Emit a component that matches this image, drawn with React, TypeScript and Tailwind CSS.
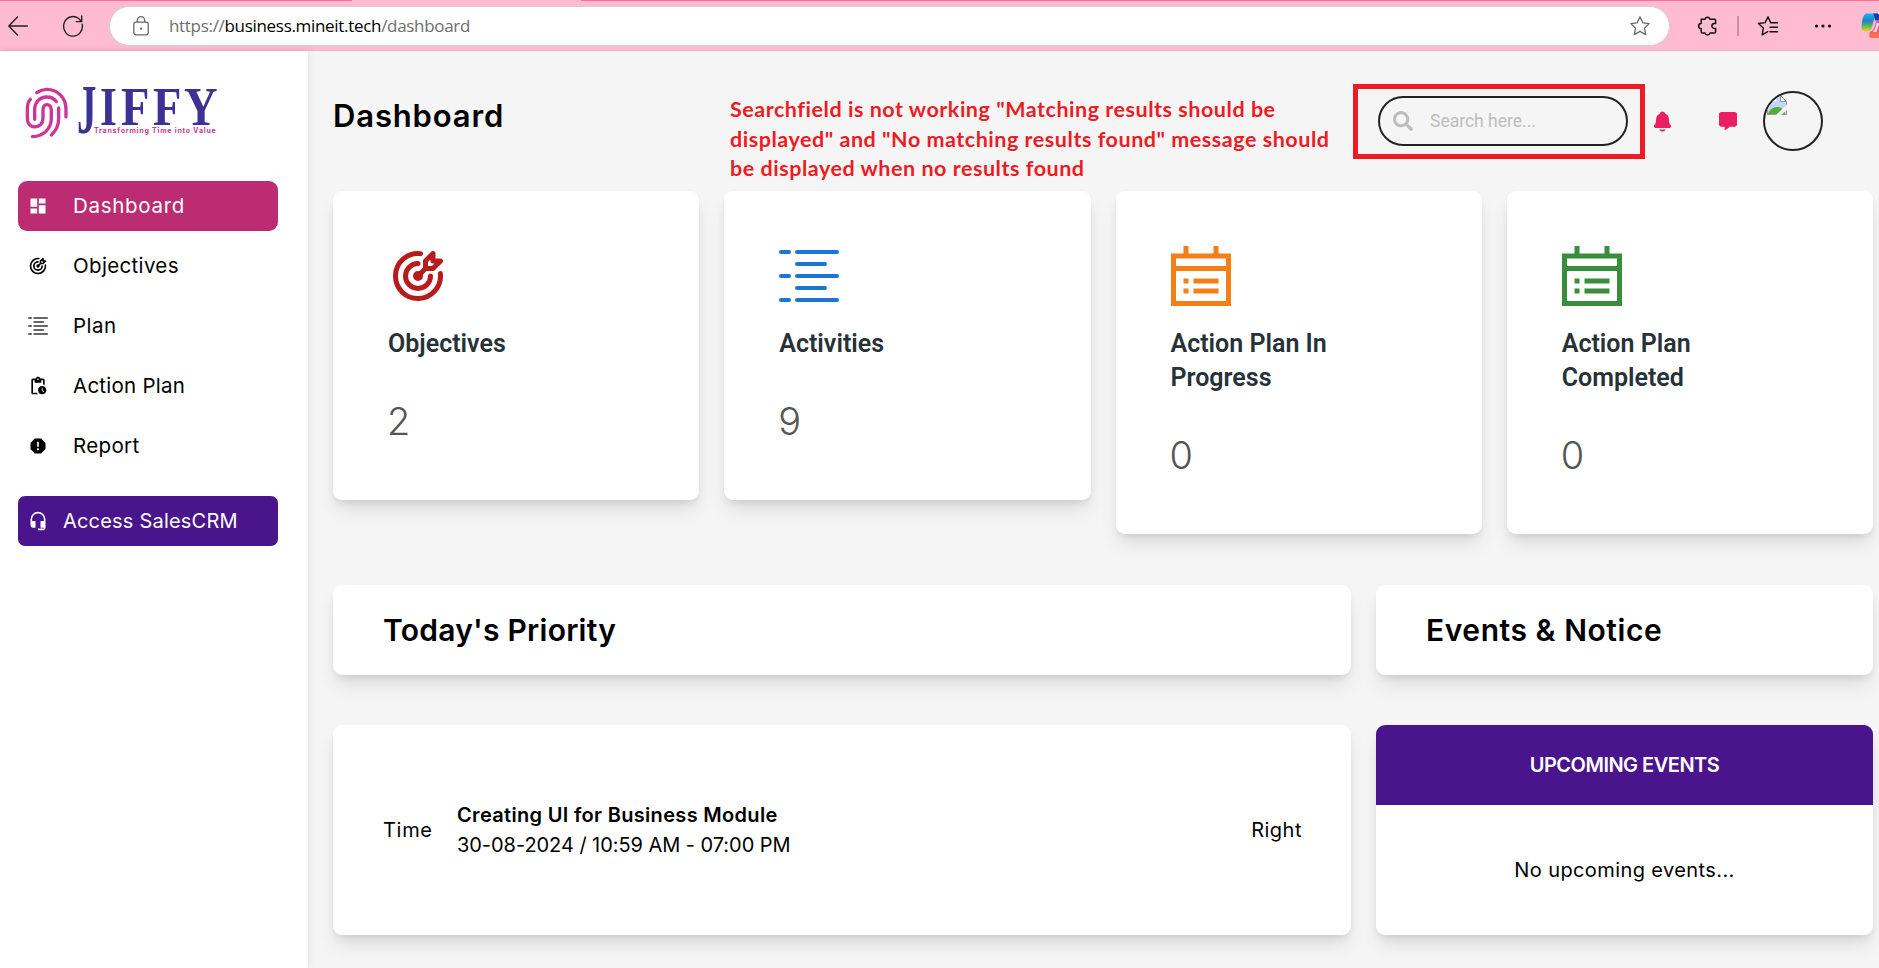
import React from "react";
import type { ReactNode } from "react";
import { IoNotifications } from "react-icons/io5";
import { FaMessage } from "react-icons/fa6";
import { FaSearch } from "react-icons/fa";
import { MdDashboard, MdHeadsetMic, MdPendingActions, MdReport } from "react-icons/md";
import { TbTargetArrow } from "react-icons/tb";

const cardShadow =
  "shadow-[0_12.5px_19px_-3.75px_rgba(0,0,0,0.1),0_5px_8px_-3px_rgba(0,0,0,0.1)]";

function PlanIcon({ className }: { className: string }) {
  return (
    <svg viewBox="0 0 60 60" className={className} fill="none" stroke="currentColor" strokeWidth="4" strokeLinecap="round">
      <path d="M2 6h8M18 6h40M18 18h28M2 30h8M18 30h40M18 42h28M2 54h8M18 54h40" />
    </svg>
  );
}

function CalendarIcon({ className }: { className: string }) {
  return (
    <svg viewBox="0 0 24 24" className={className} fill="none" stroke="currentColor" strokeWidth="2">
      <path d="M6 4V0M18 4V0M1 4h22v19H1zM1 9h22M5 14h2M9 14h10M5 18h2M9 18h10" />
    </svg>
  );
}

function BrowserBar() {
  return (
    <div className="flex h-[51px] shrink-0 flex-col border-b border-[#f5aec6] bg-[#ffbbd2]">
      <div className="flex h-px shrink-0 justify-between">
        <div className="w-[352px] bg-[#ff6b9d]" />
        <div className="w-[1298px] bg-[#ff6b9d]" />
      </div>
      <div className="flex grow items-center overflow-hidden">
        <svg viewBox="0 0 20 20" className="ml-2 size-5 shrink-0" fill="none" stroke="#222" strokeWidth="1.4" strokeLinecap="round" strokeLinejoin="round">
          <path d="M19.3 10H.8M9.5 .9.8 10l8.7 9.1" />
        </svg>
        <svg viewBox="0 0 22 24" className="ml-[34px] h-6 w-[22px] shrink-0" fill="none" stroke="#222" strokeWidth="1.4" strokeLinecap="round" strokeLinejoin="round">
          <path d="M20.2 10.2A9.4 9.8 0 1 1 16.4 4.3L19.6 7.4M19.7 2v5.6h-5.6" />
        </svg>
        <div className="ml-[25px] flex h-10 w-[1561px] shrink-0 items-center rounded-full border border-[#d3cdd0] bg-white">
          <svg viewBox="0 0 16 20" className="ml-[23px] h-5 w-4 shrink-0" fill="none" stroke="#666" strokeWidth="1.3">
            <rect x=".8" y="6.2" width="14.4" height="12.6" rx="2" />
            <path d="M4.3 6V4.4a3.7 3.7 0 0 1 7.4 0V6" />
            <circle cx="8" cy="12.7" r="1.1" fill="#666" stroke="none" />
          </svg>
          <span className="ml-[20px] font-['Open_Sans',sans-serif] text-[17px] tracking-[-0.31px] text-[#6d6d6d]">
            https://<span className="text-black">business.mineit.tech</span>/dashboard
          </span>
          <svg viewBox="0 0 22 22" className="mr-[18px] ml-auto size-[22px]" fill="none" stroke="#6a6a6a" strokeWidth="1.3" strokeLinejoin="round">
            <path d="m11 1.800 2.800 6 6.400.8-4.700 4.500 1.200 6.500-5.700-3.200-5.700 3.200 1.200-6.500L1.800 8.600l6.400-.8z" />
          </svg>
        </div>
        <svg viewBox="0 0 22 22" className="ml-[27px] size-[22px] shrink-0" fill="none" stroke="#111" strokeWidth="1.5" strokeLinejoin="round">
          <path d="M4.200 4.200H8a2.600 2.600 0 0 1 5 0h4.600a1 1 0 0 1 1 1v3.200h-1.200a2.500 2.500 0 0 0 0 5h1.200v3.700a1 1 0 0 1-1 1H13a2.600 2.600 0 0 1-5 0H5.200a1 1 0 0 1-1-1v-3.500a2.600 2.600 0 0 1 0-5.200z" />
        </svg>
        <div className="ml-[18px] h-5 w-0.5 shrink-0 bg-[#c890a4]" />
        <svg viewBox="0 0 22 22" className="ml-[18px] size-[22px] shrink-0" fill="none" stroke="#111" strokeWidth="1.4" strokeLinejoin="round" strokeLinecap="round">
          <path d="M20.500 7.800h-6.800L11 1.800 8.200 7.600 1.400 8.500l4.900 4.600-1.100 6.700 5.600-3.100M13 12.300h7.500M13 16.800h7.500" />
        </svg>
        <svg viewBox="0 0 18 6" className="ml-[35px] h-1.5 w-[18px] shrink-0" fill="#111">
          <circle cx="2.500" cy="3" r="1.600" />
          <circle cx="9" cy="3" r="1.600" />
          <circle cx="15.500" cy="3" r="1.600" />
        </svg>
        <svg viewBox="0 0 28 28" className="ml-[29px] size-7 shrink-0">
          <defs>
            <linearGradient id="copilotCool" x1="0" y1="0" x2="0" y2="1">
              <stop offset="0" stopColor="#1fb2f5" />
              <stop offset=".4" stopColor="#1b83c9" />
              <stop offset=".7" stopColor="#5fb95c" />
              <stop offset="1" stopColor="#f7cf10" />
            </linearGradient>
            <linearGradient id="copilotWarm" x1="0" y1="0" x2="0" y2="1">
              <stop offset="0" stopColor="#d65bd0" />
              <stop offset=".5" stopColor="#f2587d" />
              <stop offset="1" stopColor="#f97a3c" />
            </linearGradient>
          </defs>
          <path d="M6 1.500h11c-3 1-4 5-5 10s-2.500 8-6 8C2 19.500.300 18 .600 14 1 9 2 1.500 6 1.500z" fill="url(#copilotCool)" />
          <path d="M12 1.500h4c2 0 3 3 3.500 7h-5.500c-.500-3-1-6-2-7z" fill="#123fa8" />
          <path d="M15 9h9c4 0 3 17-3 17H10.500C7.500 26 8 22 9 19.500c4 0 4.500-5 6-10.500z" fill="url(#copilotWarm)" />
          <path d="M15.500 11h3l-3 9h-3.500c2-2 2.800-6 3.500-9z" fill="#ffd3e0" />
        </svg>
      </div>
    </div>
  );
}

function Logo() {
  return (
    <div className="ml-[25px] flex h-[54px] items-start">
      <svg viewBox="75 110 132 158" className="h-[52.600px] w-[44px] shrink-0" fill="none" stroke="#cf3498" strokeWidth="10" strokeLinecap="round">
        <path d="M110 127Q125 117 140 117C172 117 198 142 198 176V200" />
        <path d="M91 147Q82 156 82 176V205C82 222 93 230 104 230 118 230 129 220 129 205V180C129 168 134 163 141 163 148 163 154 169 154 180V205C154 235 130 259 97 259" />
        <path d="M104 207V178C104 155 120 140 140 140 153 140 163 145 169 154" />
        <path d="M176 173V205C176 225 168 242 154 254" />
      </svg>
      <div className="ml-2 h-[54px] w-[142px] font-['Liberation_Serif',serif] text-[54px] leading-[36px] font-bold text-[#3c3195]">
        <div className="flex h-9 items-center pt-[3px]">
          <span className="inline-block w-[23px] origin-[0_0] scale-x-[0.72] scale-y-[1.280]"><span className="relative -top-[2px]">J</span></span>
          <span className="inline-block w-[21px] origin-left scale-x-[0.800]">I</span>
          <span className="inline-block w-[32px] origin-left scale-x-[0.860]">F</span>
          <span className="inline-block w-[31px] origin-left scale-x-[0.860]">F</span>
          <span className="inline-block w-[34px] origin-left scale-x-[0.860]">Y</span>
        </div>
        <div className="mt-[3px] ml-[17px] font-['Inter',sans-serif] text-[7px] leading-[10px] font-bold tracking-[0.780px] whitespace-nowrap text-[#cf3498]">
          Transforming Time into Value
        </div>
      </div>
    </div>
  );
}

function NavItem({ icon, label, text, active }: { icon: ReactNode; label: string; text: string; active?: boolean }) {
  return (
    <a className={`flex h-[50px] items-center rounded-[9px] pl-[10px] text-xl ${active ? "bg-[#bb2c73] text-white" : "text-black"}`}>
      <span className="flex w-[45px] shrink-0">{icon}</span>
      <span className={text}>{label}</span>
    </a>
  );
}

function Sidebar() {
  return (
    <aside className="z-10 flex w-[308px] shrink-0 flex-col bg-white pt-[36px] shadow-[0_0_8px_rgba(0,0,0,0.1)]">
      <Logo />
      <nav className="mt-10 ml-[18px] flex w-[260px] flex-col gap-2.5">
        <NavItem active icon={<MdDashboard />} label="Dashboard" text="text-[20.500px] tracking-[0.700px]" />
        <NavItem icon={<TbTargetArrow />} label="Objectives" text="text-[20.500px] tracking-[0.340px]" />
        <NavItem icon={<PlanIcon className="size-5 text-[#333]" />} label="Plan" text="text-[20.500px] tracking-[0.500px]" />
        <NavItem icon={<MdPendingActions />} label="Action Plan" text="text-[20.500px] tracking-[0.250px]" />
        <NavItem icon={<MdReport />} label="Report" text="text-[20.500px] tracking-[0.350px]" />
      </nav>
      <a className="mt-[25px] ml-[18px] flex h-[50px] w-[260px] items-center rounded-[7px] bg-[#4a148c] pl-[10px] text-xl text-white">
        <MdHeadsetMic />
        <span className="ml-[15px] tracking-[0.200px]">Access SalesCRM</span>
      </a>
    </aside>
  );
}

function BrokenAvatar() {
  return (
    <div className="size-[60px] overflow-hidden rounded-full border-2 border-[#222]">
      <svg viewBox="0 0 20 20" className="mt-0.5 ml-0.5 size-5">
        <path d="M.500.500h13l6 6v13H.500z" fill="#c3d7f5" stroke="#999" />
        <path d="M1 19c1-4 5-7 9-7s6 2 8 4v3z" fill="#55ab33" />
        <path d="M4 4.500a2 2 0 0 1 4 0h1.500v2H3z" fill="#fff" />
        <path d="M20 9.500 9 20h5l6-5z" fill="#f5f5f5" />
        <path d="M13.500.500v6h6z" fill="#f5f5f5" stroke="#999" />
      </svg>
    </div>
  );
}

function Header() {
  return (
    <header className="relative flex h-[140px] shrink-0">
      <h1 className="pt-[42px] text-[31px] leading-[45px] font-semibold tracking-[0.850px]">Dashboard</h1>
      <div className="ml-auto flex h-[140px] items-center pr-[50px]">
        <div className="flex h-[50px] w-[250px] items-center rounded-full border-2 border-[#222] pl-[13px]">
          <FaSearch className="size-5 text-[#bdbdbd]" />
          <span className="mt-px ml-[17.500px] font-['Roboto',sans-serif] text-[17.500px] text-[#bdbdbd]">Search here...</span>
        </div>
        <IoNotifications className="ml-[23.500px] size-[23px] text-[#e91e63]" />
        <FaMessage className="ml-[45px] size-[18px] text-[#e91e63]" />
        <div className="ml-[26px]">
          <BrokenAvatar />
        </div>
      </div>
      <p className="absolute top-[44px] left-[397px] font-['Lato',sans-serif] text-[21.500px] leading-[29.500px] font-bold tracking-[0.530px] whitespace-nowrap text-[#ed1c24]">
        Searchfield is not working "Matching results should be
        <br />
        displayed" and "No matching results found" message should
        <br />
        be displayed when no results found
      </p>
      <div className="absolute top-[33px] left-[1020px] h-[75px] w-[292px] border-5 border-[#ed1c24]" />
    </header>
  );
}

function StatCard({ icon, title, value }: { icon: ReactNode; title: string; value: number }) {
  return (
    <section className={`rounded-[9px] bg-white px-[55px] pt-[55px] pb-[55px] ${cardShadow}`}>
      {icon}
      <h3 className="mt-[21px] w-[190px] font-['Roboto',sans-serif] text-[25px] leading-[34px] font-semibold text-[#263238]">{title}</h3>
      <p className="mt-9 -ml-px text-[38px] leading-[48px] font-light text-[#555]">{value}</p>
    </section>
  );
}

export default function App() {
  return (
    <div className="flex h-[968px] w-[1879px] flex-col overflow-hidden bg-[#f5f5f5] font-['Inter',sans-serif] text-black">
      <BrowserBar />
      <div className="flex min-h-0 grow">
        <Sidebar />
        <main className="flex grow flex-col pr-1.5 pl-[25px]">
          <Header />
          <div className="grid h-[344px] grid-cols-4 items-start gap-[25px]">
            <StatCard icon={<TbTargetArrow className="size-[60px] text-[#b71c1c]" />} title="Objectives" value={2} />
            <StatCard icon={<PlanIcon className="size-[60px] text-[#1976d2]" />} title="Activities" value={9} />
            <StatCard icon={<CalendarIcon className="size-[60px] text-[#f57f17]" />} title="Action Plan In Progress" value={0} />
            <StatCard icon={<CalendarIcon className="size-[60px] text-[#388e3c]" />} title="Action Plan Completed" value={0} />
          </div>
          <div className="mt-[50px] grid grid-cols-[1018px_1fr] gap-x-[25px] gap-y-[50px]">
            <h2 className={`flex h-[90px] items-center rounded-[9px] bg-white pl-[50px] text-[30px] font-semibold tracking-[0.250px] ${cardShadow}`}>
              Today's Priority
            </h2>
            <h2 className={`flex h-[90px] items-center rounded-[9px] bg-white pl-[50px] text-[30px] font-semibold tracking-[0.560px] ${cardShadow}`}>
              Events &amp; Notice
            </h2>
            <section className={`flex h-[210px] items-center rounded-[9px] bg-white pr-[49px] pl-[50px] text-xl ${cardShadow}`}>
              <span className="w-[74px] tracking-[0.700px]">Time</span>
              <div className="leading-[30px]">
                <p className="font-semibold tracking-[0.320px]">Creating UI for Business Module</p>
                <p className="tracking-[-0.050px]">30-08-2024 / 10:59 AM - 07:00 PM</p>
              </div>
              <span className="ml-auto tracking-[0.500px]">Right</span>
            </section>
            <section className={`flex h-[210px] flex-col overflow-hidden rounded-[9px] bg-white text-xl ${cardShadow}`}>
              <div className="flex h-20 items-center justify-center bg-[#4a148c] font-semibold tracking-[-0.500px] text-white">
                UPCOMING EVENTS
              </div>
              <div className="flex grow items-center justify-center tracking-[0.400px]">No upcoming events...</div>
            </section>
          </div>
        </main>
      </div>
    </div>
  );
}
